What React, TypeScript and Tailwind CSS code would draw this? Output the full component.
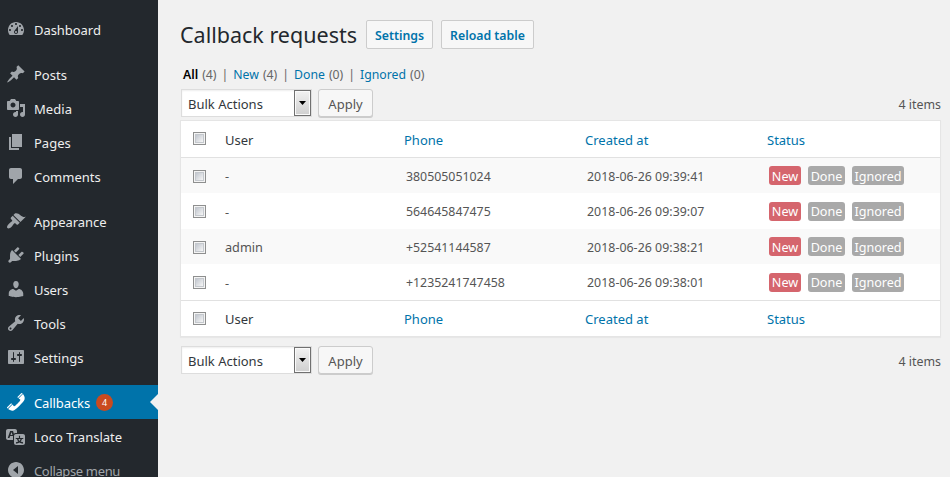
import React from "react";

const icons = {
  dashboard:
    "M3.76 16h12.48c1.1-1.37 1.76-3.11 1.76-5 0-4.42-3.58-8-8-8s-8 3.58-8 8c0 1.89.66 3.63 1.76 5zM10 4c.55 0 1 .45 1 1s-.45 1-1 1-1-.45-1-1 .45-1 1-1zM6 6c.55 0 1 .45 1 1s-.45 1-1 1-1-.45-1-1 .45-1 1-1zm8 0c.55 0 1 .45 1 1s-.45 1-1 1-1-.45-1-1 .45-1 1-1zm-5.37 5.55L12 7v6c0 1.1-.9 2-2 2s-2-.9-2-2c0-.57.24-1.08.63-1.45zM4 10c.55 0 1 .45 1 1s-.45 1-1 1-1-.45-1-1 .45-1 1-1zm12 0c.55 0 1 .45 1 1s-.45 1-1 1-1-.45-1-1 .45-1 1-1zm-5 3c0-.55-.45-1-1-1s-1 .45-1 1 .45 1 1 1 1-.45 1-1z",
  post: "M10.44 3.02l1.82-1.82 6.36 6.35-1.83 1.82c-1.05-.68-2.48-.57-3.41.36l-.75.75c-.92.93-1.04 2.35-.35 3.41l-1.83 1.82-2.41-2.41-2.8 2.79c-.42.42-3.38 2.71-3.8 2.29s1.86-3.39 2.28-3.81l2.79-2.79L4.1 9.36l1.83-1.82c1.05.69 2.48.57 3.4-.36l.75-.75c.93-.92 1.05-2.35.36-3.41z",
  media:
    "M13 11V4c0-.55-.45-1-1-1h-1.67L9 1H5L3.67 3H2c-.55 0-1 .45-1 1v7c0 .55.45 1 1 1h10c.55 0 1-.45 1-1zM7 4.5c1.38 0 2.5 1.12 2.5 2.5S8.38 9.5 7 9.5 4.5 8.38 4.5 7 5.62 4.5 7 4.5zM14 6h5v10.5c0 1.38-1.12 2.5-2.5 2.5S14 17.88 14 16.5s1.12-2.5 2.5-2.5c.17 0 .34.02.5.05V9h-3V6zm-4 8.05V13h2v3.5c0 1.38-1.12 2.5-2.5 2.5S7 17.88 7 16.5 8.12 14 9.5 14c.17 0 .34.02.5.05z",
  page: "M6 15V2h10v13H6zm-1 1h8v2H3V5h2v11z",
  comments: "M5 2h9c1.1 0 2 .9 2 2v7c0 1.1-.9 2-2 2h-2l-5 5v-5H5c-1.1 0-2-.9-2-2V4c0-1.1.9-2 2-2z",
  appearance:
    "M14.48 11.06L7.41 3.99l1.5-1.5c.5-.56 2.3-.47 3.51.32 1.21.8 1.43 1.28 2.91 2.1 1.18.64 2.45 1.26 4.45.85zm-.71.71L6.7 4.7 4.93 6.47c-.39.39-.39 1.02 0 1.41l1.06 1.06c.39.39.39 1.03 0 1.42-.6.6-1.43 1.11-2.21 1.69-.35.26-.7.53-1.01.84C1.43 14.23.4 16.08 1.4 17.07c.99 1 2.84-.03 4.18-1.36.31-.31.58-.66.85-1.02.57-.78 1.08-1.61 1.69-2.21.39-.39 1.02-.39 1.41 0l1.06 1.06c.39.39 1.02.39 1.41 0z",
  plugins:
    "M13.11 4.36L9.87 7.6 8 5.73l3.24-3.24c.35-.34 1.05-.2 1.56.32.52.51.66 1.21.31 1.55zm-8 1.77l.91-1.12 9.01 9.01-1.19.84c-.71.71-2.63 1.16-3.82 1.16H6.14L4.9 17.26c-.59.59-1.54.59-2.12 0-.59-.58-.59-1.53 0-2.12l1.24-1.24v-3.88c0-1.13.4-3.19 1.09-3.89zm7.26 3.97l3.24-3.24c.34-.35 1.04-.21 1.55.31.52.51.66 1.21.31 1.55l-3.24 3.25z",
  users:
    "M10 9.25c-2.27 0-2.73-3.44-2.73-3.44C7 4.02 7.82 2 9.97 2c2.16 0 2.98 2.02 2.71 3.81 0 0-.41 3.44-2.68 3.44zm0 2.57L12.72 10c2.39 0 4.52 2.33 4.52 4.53v2.49s-3.65 1.13-7.24 1.13c-3.65 0-7.24-1.13-7.24-1.13v-2.49c0-2.25 1.94-4.48 4.47-4.48z",
  tools:
    "M16.68 9.77c-1.34 1.34-3.3 1.67-4.95.99l-5.41 6.52c-.99.99-2.59.99-3.58 0s-.99-2.59 0-3.57l6.52-5.42c-.68-1.65-.35-3.61.99-4.95 1.28-1.28 3.12-1.62 4.72-1.06l-2.89 2.89 2.82 2.82 2.86-2.87c.53 1.58.18 3.39-1.08 4.65zM3.81 16.21c.4.39 1.04.39 1.43 0 .4-.4.4-1.04 0-1.43-.39-.4-1.03-.4-1.43 0-.39.39-.39 1.03 0 1.43z",
  settings:
    "M18 16V4c0-.55-.45-1-1-1H3c-.55 0-1 .45-1 1v12c0 .55.45 1 1 1h14c.55 0 1-.45 1-1zM8 11h1c.55 0 1 .45 1 1s-.45 1-1 1H8v1.5c0 .28-.22.5-.5.5s-.5-.22-.5-.5V13H6c-.55 0-1-.45-1-1s.45-1 1-1h1V5.5c0-.28.22-.5.5-.5s.5.22.5.5V11zm5-2h-1c-.55 0-1-.45-1-1s.45-1 1-1h1V5.5c0-.28.22-.5.5-.5s.5.22.5.5V7h1c.55 0 1 .45 1 1s-.45 1-1 1h-1v5.5c0 .28-.22.5-.5.5s-.5-.22-.5-.5V9z",
  phone:
    "M12.06 6l-.21-.2c-.52-.54-.43-.79.08-1.3l2.72-2.75c.81-.82.96-1.21 1.73-.48l.21.2zm.53.45l4.4-4.4c.7.94 2.34 3.47 1.53 5.34-.73 1.67-1.09 1.75-2 3-1.85 2.11-4.18 4.37-6 6.07-1.26.91-1.31 1.33-3 2-1.8.71-4.4-.89-5.38-1.56l4.4-4.4 1.18 1.62c.34.46 1.2-.06 1.8-.66 1.04-1.05 3.18-3.18 4-4.07.59-.59 1.12-1.45.66-1.8zM1.57 16.5l-.21-.21c-.68-.74-.29-.9.52-1.7l2.74-2.72c.51-.49.75-.6 1.27-.11l.2.21z",
  translation:
    "M11 7H9.49c-.63 0-1.25.3-1.59.7L7 5H4.13l-2.39 7h1.69l.74-2H7v4H2c-1.1 0-2-.9-2-2V5c0-1.1.9-2 2-2h7c1.1 0 2 .9 2 2v2zM6.51 9H4.49l1-2.93zM10 8h7c1.1 0 2 .9 2 2v7c0 1.1-.9 2-2 2h-7c-1.1 0-2-.9-2-2v-7c0-1.1.9-2 2-2zm7.25 5v-1.08h-3.17V9.75h-1.16v2.17H9.75V13h1.28c.11.85.56 1.85 1.28 2.62-.87.36-1.89.62-2.31.62-.01.02.22.97.2 1.46.84 0 2.21-.5 3.28-1.15 1.09.65 2.48 1.15 3.34 1.15-.02-.49.2-1.44.2-1.46-.43 0-1.49-.27-2.38-.63.7-.77 1.14-1.77 1.25-2.61h1.36zm-3.81 1.93c-.5-.46-.85-1.13-1.01-1.93h2.09c-.17.8-.51 1.47-1 1.93l-.04.03s-.03-.02-.04-.03z",
  collapse: "M10 2c4.42 0 8 3.58 8 8s-3.58 8-8 8-8-3.58-8-8 3.58-8 8-8zM12 6l-5 4 5 4z",
};

type Item = { label: string; icon: keyof typeof icons; gap?: boolean; active?: boolean; dim?: boolean; text: string };

const menu: Item[] = [
  { label: "Dashboard", icon: "dashboard", text: "tracking-[-0.05px]" },
  { label: "Posts", icon: "post", gap: true, text: "" },
  { label: "Media", icon: "media", text: "tracking-[0.05px]" },
  { label: "Pages", icon: "page", text: "" },
  { label: "Comments", icon: "comments", text: "" },
  { label: "Appearance", icon: "appearance", gap: true, text: "tracking-[-0.05px]" },
  { label: "Plugins", icon: "plugins", text: "" },
  { label: "Users", icon: "users", text: "tracking-[-0.1px]" },
  { label: "Tools", icon: "tools", text: "" },
  { label: "Settings", icon: "settings", text: "" },
  { label: "Callbacks", icon: "phone", gap: true, active: true, text: "tracking-[-0.1px]" },
  { label: "Loco Translate", icon: "translation", text: "" },
  { label: "Collapse menu", icon: "collapse", dim: true, text: "tracking-[-0.35px]" },
];

function MenuRow({ item }: { item: Item }) {
  const color = item.active ? "bg-[#0073aa] text-white" : item.dim ? "text-[#a0a5aa]" : "text-[#eee]";
  return (
    <li className={`relative flex h-[34px] shrink-0 items-center pl-[6px] ${item.gap ? "mt-[11px]" : ""} ${color}`}>
      <svg
        viewBox="0 0 20 20"
        className={`size-5 shrink-0 ${item.active ? "fill-white" : "fill-[#a0a5aa]"}`}
        fillRule="evenodd"
      >
        <path d={icons[item.icon]} />
      </svg>
      <span className={`ml-2 pt-[3px] text-[13px] leading-[13px] whitespace-nowrap ${item.text}`}>{item.label}</span>
      {item.active && (
        <>
          <span className="ml-[6px] flex size-[17px] items-center justify-center rounded-full bg-[#ca4a1f] text-[9px] leading-none text-white">
            4
          </span>
          <span className="absolute top-[9px] right-0 border-y-8 border-r-8 border-y-transparent border-r-[#f1f1f1]" />
        </>
      )}
    </li>
  );
}

function Checkbox() {
  return (
    <span className="flex size-[13px] border border-[#8e8f8f] bg-[#f4f4f4] p-px">
      <span className="size-[9px] border border-[#c4c8cd] bg-linear-to-br from-[#c2c7cf] to-[#f6f6f6]" />
    </span>
  );
}

function Actions() {
  return (
    <div className="flex h-[29px] items-start pl-px">
      <div className="flex h-7 w-[131px] items-center justify-between border border-[#ddd] bg-white pl-[6px] text-[13px] text-[#32373c] shadow-[inset_0_1px_2px_rgba(0,0,0,0.07)]">
        <span className="pt-px leading-5">Bulk Actions</span>
        <span className="flex h-[26px] w-[17px] items-center justify-center border border-[#707070] bg-linear-to-b from-[#f2f2f2] to-[#cfcfcf] shadow-[inset_0_0_0_1px_#fafafa]">
          <svg viewBox="0 0 7 4" className="h-1 w-[7px] fill-black">
            <path d="M0 0h7L3.5 4z" />
          </svg>
        </span>
      </div>
      <button className="ml-[6px] flex h-[28px] w-[55px] items-center justify-center rounded-[3px] border border-[#ccc] bg-[#f7f7f7] pt-px text-[13px] leading-5 text-[#555] shadow-[0_1px_0_#ccc]">
        Apply
      </button>
      <span className="ml-auto pt-[6px] text-[12.4px] leading-5 text-[#555]">4 items</span>
    </div>
  );
}

const cols = "grid grid-cols-[44px_180px_181px_182px_1fr] items-center";

function HeadRow({ foot = false }: { foot?: boolean }) {
  const pad = foot ? "" : "pt-px";
  return (
    <div className={`${cols} h-9 text-[13px] leading-5`}>
      <span className="-mt-px pl-3">
        <Checkbox />
      </span>
      <span className={`${pad} text-[#32373c]`}>User</span>
      <span className={`${pad} -ml-px text-[#0073aa]`}>Phone</span>
      <span className={`${pad} -ml-px text-[#0073aa]`}>Created at</span>
      <span className={`${pad} -ml-px text-[#0073aa]`}>Status</span>
    </div>
  );
}

const rows = [
  { user: "-", phone: "380505051024", at: "2018-06-26 09:39:41", cls: "h-[35px] bg-[#f9f9f9]", pad: "pt-[3px]" },
  { user: "-", phone: "564645847475", at: "2018-06-26 09:39:07", cls: "h-[36px]", pad: "pt-[2px]" },
  { user: "admin", phone: "+52541144587", at: "2018-06-26 09:38:21", cls: "h-[35px] bg-[#f9f9f9]", pad: "pt-[3px]" },
  { user: "-", phone: "+1235241747458", at: "2018-06-26 09:38:01", cls: "h-[36px]", pad: "pt-[2px]" },
];

const pill = "flex h-[19px] items-center justify-center rounded-[3px] pt-[3px] text-[12.6px] leading-none text-white";

const filters = [
  { name: "New", count: 4 },
  { name: "Done", count: 0 },
  { name: "Ignored", count: 0 },
];

export default function App() {
  return (
    <div className="flex h-[477px] w-[950px] overflow-hidden bg-[#f1f1f1] font-['Noto_Sans','Open_Sans',sans-serif] text-[#444]">
      <nav className="h-full w-[158px] shrink-0 overflow-hidden bg-[#23282d] pt-3">
        <ul className="flex flex-col">
          {menu.map((m) => (
            <MenuRow key={m.label} item={m} />
          ))}
        </ul>
      </nav>

      <main className="flex w-[783px] flex-col pt-5 pl-[22px]">
        <header className="flex h-[29px] items-center">
          <h1 className="w-[186px] whitespace-nowrap text-[21.5px] leading-[29px] text-[#23282d]">Callback requests</h1>
          <button className="flex h-[29px] w-[67px] items-center justify-center rounded-[2px] border border-[#ccc] bg-[#f7f7f7] pt-[3px] text-[12.3px] leading-5 font-semibold text-[#0073aa]">
            Settings
          </button>
          <button className="ml-2 flex h-[29px] w-[93px] items-center justify-center rounded-[2px] border border-[#ccc] bg-[#f7f7f7] pt-[3px] text-[12.3px] leading-5 font-semibold whitespace-nowrap text-[#0073aa]">
            Reload table
          </button>
        </header>

        <div className="mt-[16px] flex h-5 items-center gap-1 pt-px pl-[3px] text-[12.25px] text-[#666]">
          <b className="font-semibold text-black">All</b>
          <span>(4)</span>
          {filters.map((f) => (
            <React.Fragment key={f.name}>
              <span className="mx-px">|</span>
              <span className="text-[#0073aa]">{f.name}</span>
              <span>({f.count})</span>
            </React.Fragment>
          ))}
        </div>

        <div className="mt-[4px]">
          <Actions />
        </div>

        <section className="mt-[2px] h-[217px] w-[761px] border border-[#e5e5e5] bg-white shadow-[0_1px_1px_rgba(0,0,0,0.04)]">
          <HeadRow />
          <div className="h-[144px] border-y border-[#e1e1e1]">
            {rows.map((r) => (
              <div key={r.at} className={`${cols} ${r.cls} text-[12.35px] leading-5 text-[#555]`}>
                <span className="pt-px pl-3">
                  <Checkbox />
                </span>
                <span className="pt-px text-[12.7px]">{r.user}</span>
                <span className={`${r.pad} pl-px`}>{r.phone}</span>
                <span className={`${r.pad} pl-px tracking-[0.04px]`}>{r.at}</span>
                <span className="flex gap-[7px] pl-px">
                  <span className={`${pill} w-8 bg-[#d5656d]`}>New</span>
                  <span className={`${pill} w-[37px] bg-[#a9a9a9]`}>Done</span>
                  <span className={`${pill} w-[52px] bg-[#a9a9a9]`}>Ignored</span>
                </span>
              </div>
            ))}
          </div>
          <HeadRow foot />
        </section>

        <div className="mt-[9px]">
          <Actions />
        </div>
      </main>
    </div>
  );
}
